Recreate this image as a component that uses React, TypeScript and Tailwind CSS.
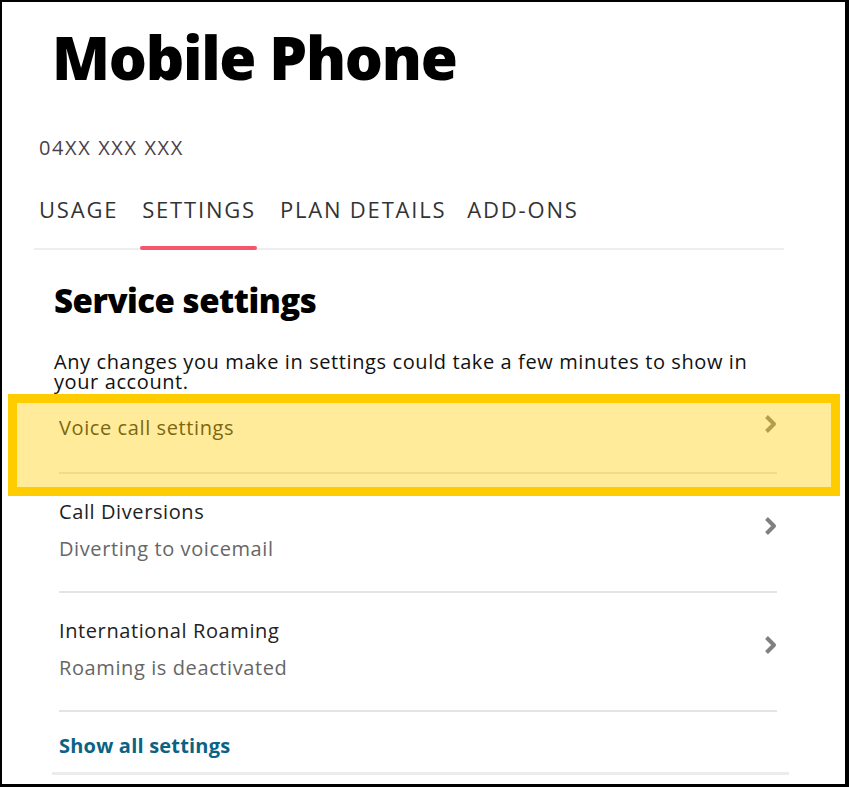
const tabs = ['USAGE', 'SETTINGS', 'PLAN DETAILS', 'ADD-ONS'];

const rows = [
  { title: 'Voice call settings', sub: '' },
  { title: 'Call Diversions', sub: 'Diverting to voicemail' },
  { title: 'International Roaming', sub: 'Roaming is deactivated' },
];

function Chevron({ className }: { className?: string }) {
  return (
    <svg width="16" height="22" viewBox="0 0 16 22" className={className} fill="none">
      <path d="M3.5 3.5 L11 11 L3.5 18.5" stroke="currentColor" strokeWidth="4" strokeLinejoin="round" />
    </svg>
  );
}

export default function App() {
  return (
    <div
      className="relative w-[849px] h-[787px] overflow-hidden bg-white border-t-2 border-l-2 border-r-[4px] border-b-[3px] border-black"
      style={{ fontFamily: '"Open Sans", "Noto Sans", sans-serif' }}
    >
      <h1 className="pl-[50px] pt-[17px] text-[60px] leading-[76px] font-extrabold text-black tracking-[-1.3px]">
        Mobile Phone
      </h1>

      <div className="pl-[37px] mt-[41px] text-[20px] leading-[24px] tracking-[1.6px] text-[#4b3f4b]">
        04XX XXX XXX
      </div>

      <div className="ml-[32px] mr-[61px] mt-[36px] border-b-2 border-[#eeeeee]">
        <div className="flex pl-[5px] gap-[24px] text-[22px] leading-[26px] tracking-[1.8px] text-[#333333]">
          {tabs.map((t) => (
            <div key={t} className={`relative pb-[26px] ${t === 'ADD-ONS' ? '-ml-[3px]' : ''}`}>
              {t}
              {t === 'SETTINGS' && (
                <div className="absolute -left-[2px] right-[-1px] bottom-[-2px] h-[4px] rounded-sm bg-[#f5566b]" />
              )}
            </div>
          ))}
        </div>
      </div>

      <div className="pl-[52px] pr-[68px]">
        <h2 className="mt-[32px] text-[33px] leading-[38px] font-extrabold text-black tracking-[-0.5px]">
          Service settings
        </h2>
        <p className="mt-[32px] max-w-[720px] text-[20px] leading-[20px] tracking-[0.6px] text-[#111111]">
          Any changes you make in settings could take a few minutes to show in your account.
        </p>

        <div className="pl-[5px] tracking-[0.6px]">
          {rows.map((r, i) => (
            <div
              key={r.title}
              className={`flex items-start justify-between border-b-2 border-[#e2e5e8] ${
                i === 0 ? 'pt-[24px] h-[82px]' : 'pt-[26px] h-[119px]'
              }`}
            >
              <div>
                <div className="text-[20px] leading-[24px] text-[#222222]">{r.title}</div>
                {r.sub && <div className="mt-[13px] text-[20px] leading-[24px] text-[#666666]">{r.sub}</div>}
              </div>
              <Chevron className={`text-[#808080] mr-[-2px] ${i === 0 ? 'mt-[-3px]' : 'mt-[15px]'}`} />
            </div>
          ))}
          <div className="pt-[22px] text-[20px] leading-[24px] font-bold text-[#0b6384] tracking-[0.2px]">
            Show all settings
          </div>
        </div>
        <div className="mt-[14px] ml-[-2px] mr-[-12px] h-[3px] bg-[#ececec]" />
      </div>

      <div className="absolute left-[6px] top-[392px] w-[832px] h-[102px] border-[9px] border-[#ffcc00] bg-[#ffcc00]/40" />
    </div>
  );
}
